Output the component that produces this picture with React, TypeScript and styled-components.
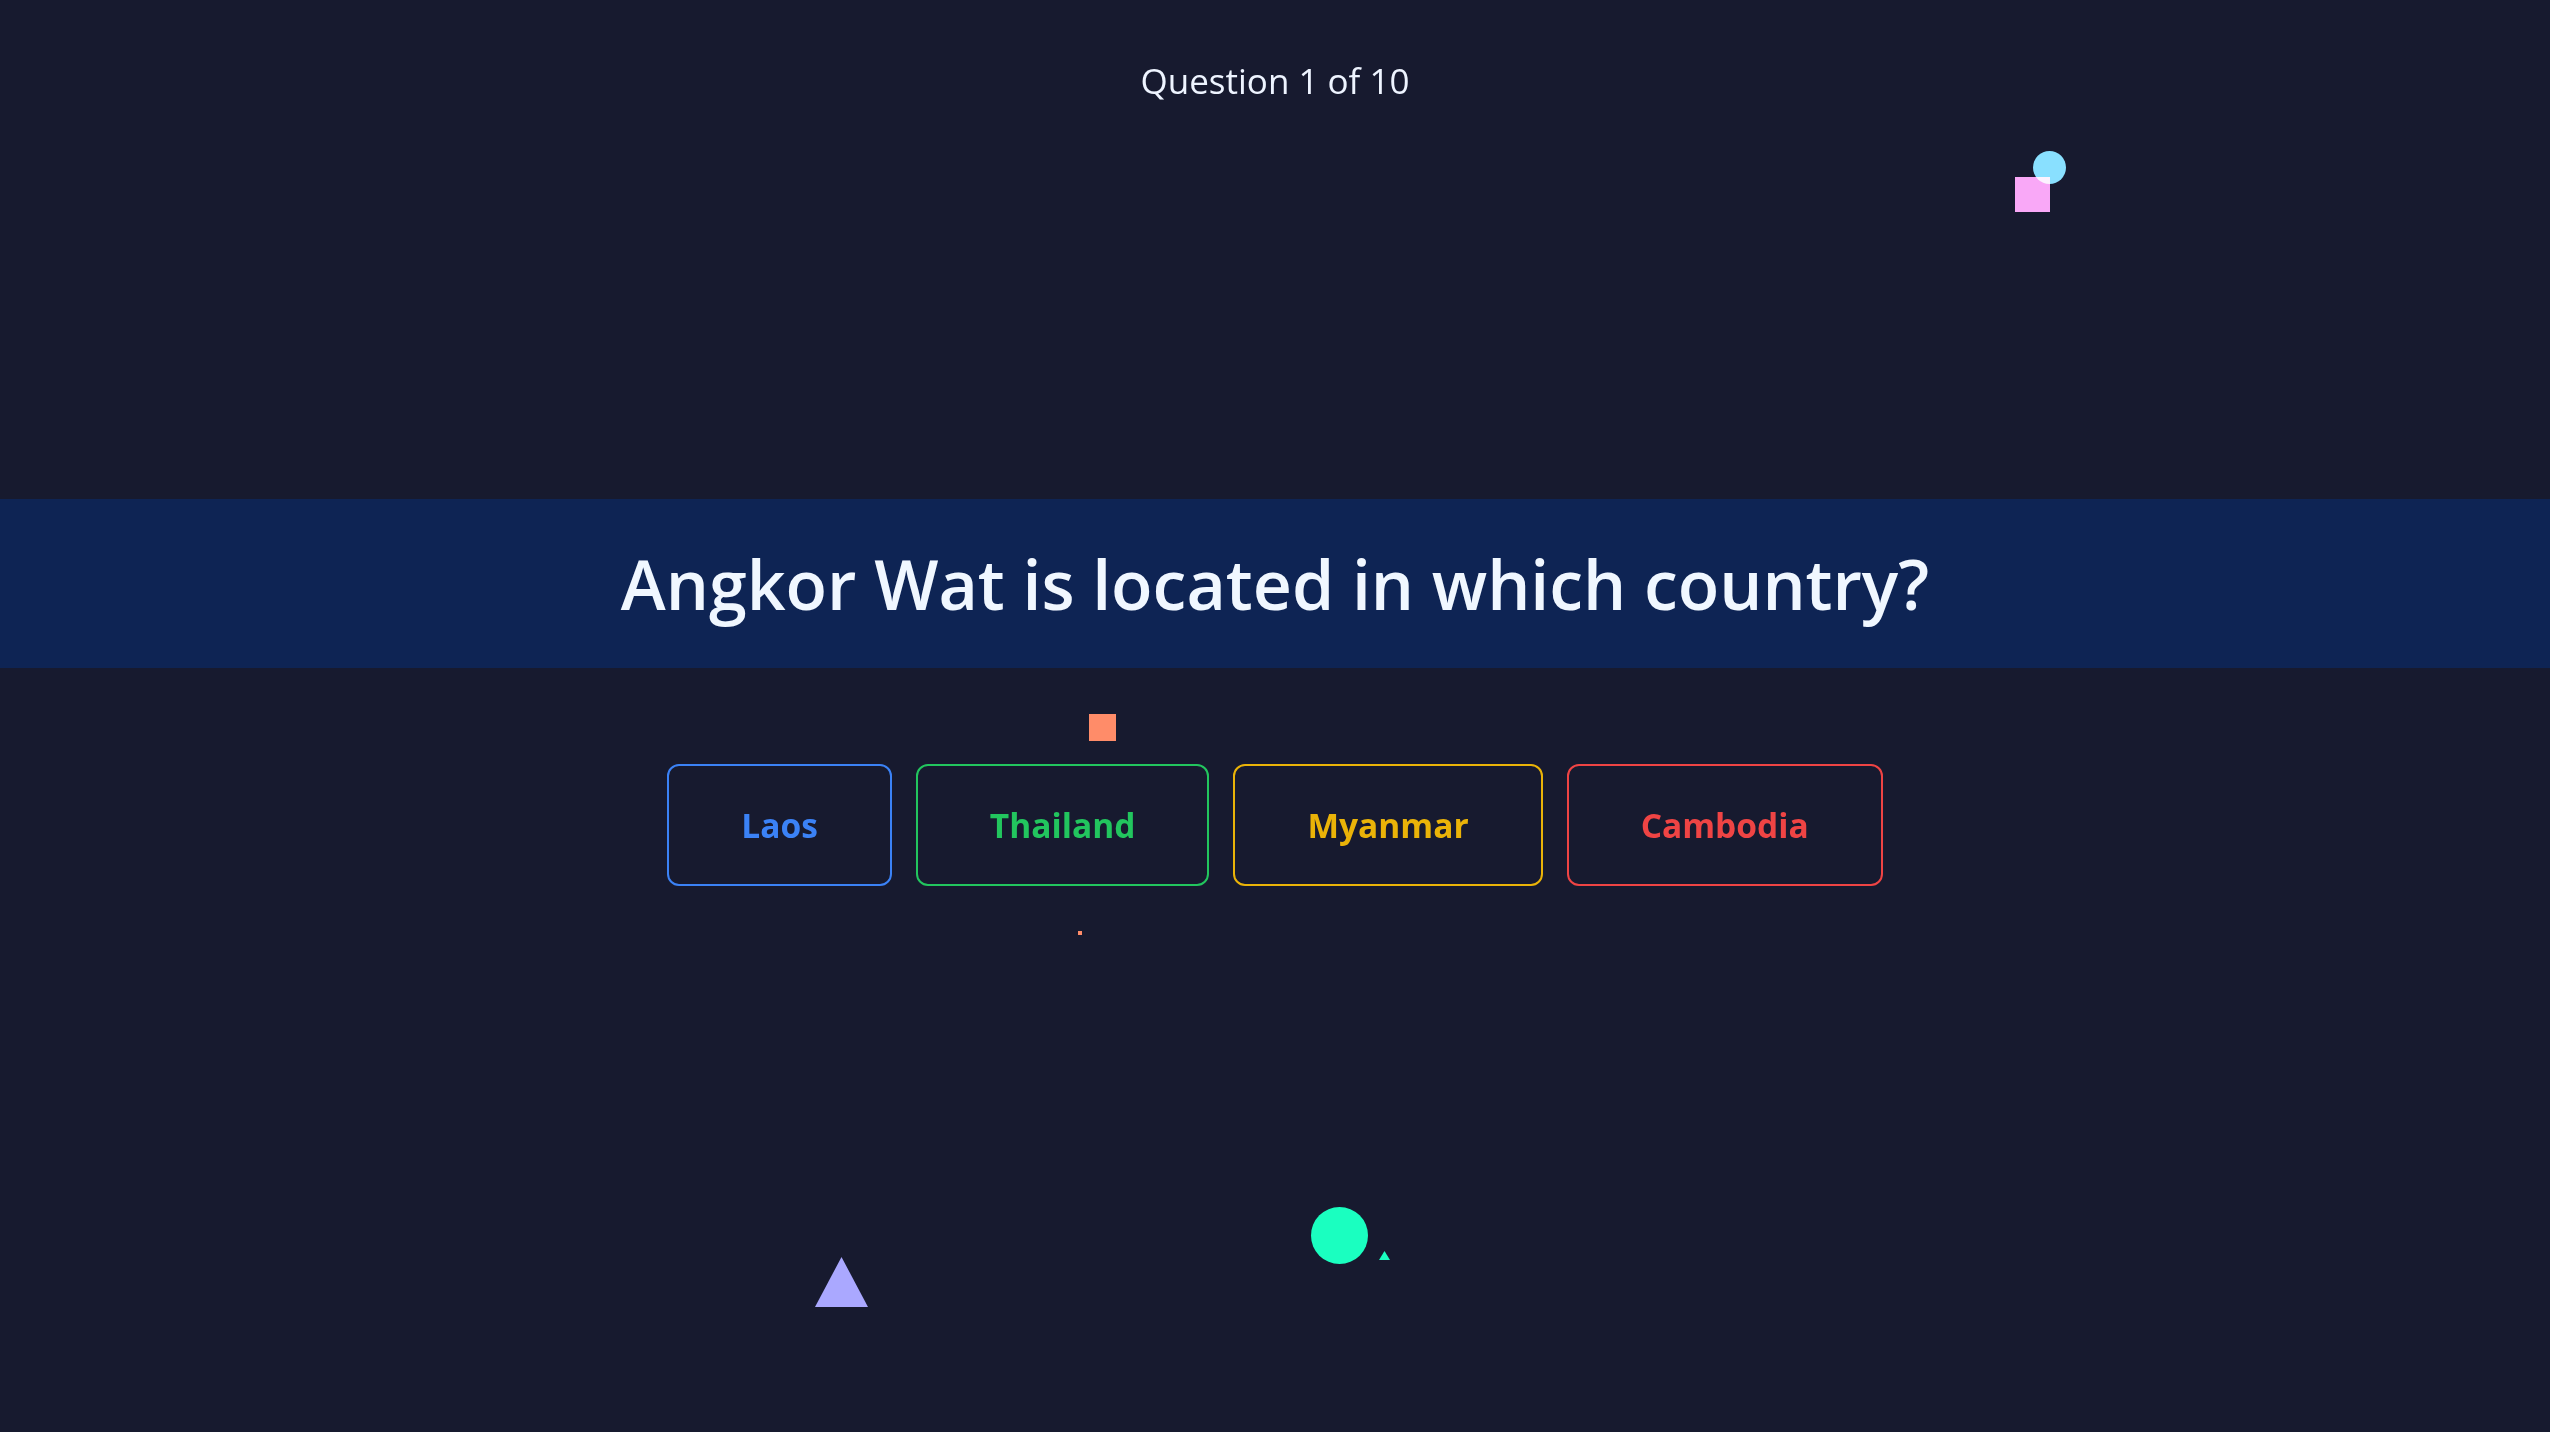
import React from "react";
import styled, { createGlobalStyle } from "styled-components";

const GlobalStyle = createGlobalStyle`
  html, body {
    margin: 0;
    padding: 0;
    background: #171a2f;
  }
  body {
    font-family: "Open Sans", "Noto Sans", sans-serif;
  }
`;

const Page = styled.div`
  position: relative;
  width: 2550px;
  height: 1432px;
  overflow: hidden;
  background: #171a2f;
  display: flex;
  flex-direction: column;
  align-items: center;
`;

const Counter = styled.div`
  margin-top: 57px;
  height: 48px;
  line-height: 48px;
  font-size: 35px;
  font-weight: 400;
  color: #eef4ff;
`;

const Banner = styled.div`
  margin-top: 394px;
  width: 100%;
  height: 169px;
  background: #0e2454;
  display: flex;
  align-items: center;
  justify-content: center;
`;

const Title = styled.h1`
  margin: 0;
  font-size: 68px;
  font-weight: 600;
  color: #f0f7ff;
`;

const Options = styled.div`
  margin-top: 96px;
  display: flex;
  gap: 24px;
`;

const Option = styled.button<{ $color: string }>`
  height: 122px;
  padding: 0 72px;
  background: transparent;
  border: 2px solid ${(p) => p.$color};
  border-radius: 12px;
  font-family: "Open Sans", "Noto Sans", sans-serif;
  font-size: 33.5px;
  font-weight: 700;
  color: ${(p) => p.$color};
  cursor: pointer;
`;

/* Decorative confetti floating over the page */
const Confetti = styled.div<{ $x: number; $y: number; $size: number; $color: string; $round?: boolean }>`
  position: absolute;
  left: ${(p) => p.$x}px;
  top: ${(p) => p.$y}px;
  width: ${(p) => p.$size}px;
  height: ${(p) => p.$size}px;
  background: ${(p) => p.$color};
  border-radius: ${(p) => (p.$round ? "50%" : "0")};
`;

const Bubble = styled(Confetti)`
  mix-blend-mode: screen;
`;

const TriangleConfetti = styled.svg<{ $x: number; $y: number }>`
  position: absolute;
  left: ${(p) => p.$x}px;
  top: ${(p) => p.$y}px;
`;

const options = [
  { label: "Laos", color: "#3b82f6" },
  { label: "Thailand", color: "#22c55e" },
  { label: "Myanmar", color: "#eab308" },
  { label: "Cambodia", color: "#ef4444" },
];

export default function App() {
  return (
    <>
      <GlobalStyle />
      <Page>
        <Counter>Question 1 of 10</Counter>
        <Banner>
          <Title>Angkor Wat is located in which country?</Title>
        </Banner>
        <Options>
          {options.map((o) => (
            <Option key={o.label} $color={o.color}>
              {o.label}
            </Option>
          ))}
        </Options>

        <Confetti $x={2015} $y={177} $size={35} $color="#f9a8f7" />
        <Bubble $x={2033} $y={151} $size={33} $color="#7ddcff" $round />
        <Confetti $x={1089} $y={714} $size={27} $color="#ff8c69" />
        <Confetti $x={1078} $y={931} $size={4} $color="#ff8c69" />
        <Confetti $x={1311} $y={1207} $size={57} $color="#1affc0" $round />
        <TriangleConfetti $x={815} $y={1257} width={53} height={50} viewBox="0 0 53 50">
          <polygon points="26.5,0 53,50 0,50" fill="#aaa8ff" />
        </TriangleConfetti>
        <TriangleConfetti $x={1379} $y={1251} width={11} height={9} viewBox="0 0 11 9">
          <polygon points="5.5,0 11,9 0,9" fill="#1affc0" />
        </TriangleConfetti>
      </Page>
    </>
  );
}
